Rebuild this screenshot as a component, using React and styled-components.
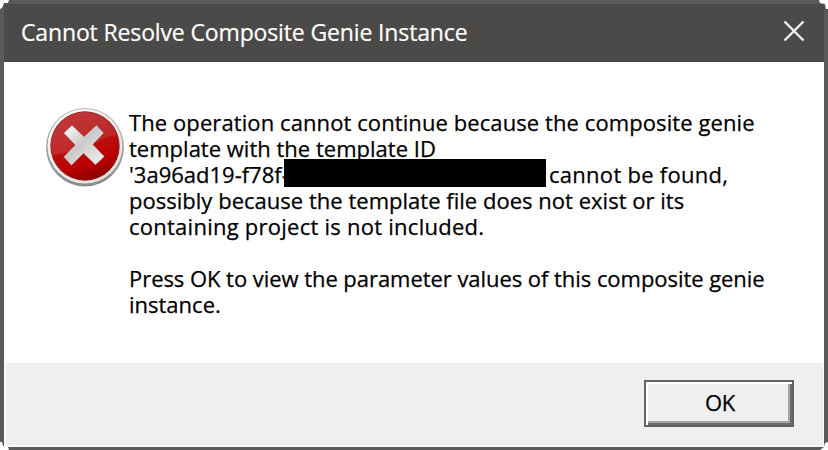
import React from 'react';
import styled, { createGlobalStyle } from 'styled-components';

const GlobalStyle = createGlobalStyle`
  body {
    margin: 0;
    background: #fff;
    font-family: 'Open Sans', 'Noto Sans', sans-serif;
  }
`;

const lines = [
  { text: 'The operation cannot continue because the composite genie', spacing: 0.09 },
  { text: 'template with the template ID', spacing: 0.01 },
  { text: "'3a96ad19-f78f-", tail: 'cannot be found,', spacing: 0, tailSpacing: 0.28 },
  { text: 'possibly because the template file does not exist or its', spacing: 0.02 },
  { text: 'containing project is not included.', spacing: 0.25 },
  { text: '', spacing: 0 },
  { text: 'Press OK to view the parameter values of this composite genie', spacing: -0.05 },
  { text: 'instance.', spacing: 0 },
];

const ErrorIcon = () => (
  <IconSvg viewBox="0 0 80 82">
    <defs>
      <linearGradient id="rim" x1="0" y1="0" x2="0" y2="1">
        <stop offset="0" stopColor="#b9b9b9" />
        <stop offset="0.5" stopColor="#a5a5a5" />
        <stop offset="1" stopColor="#8b8b8b" />
      </linearGradient>
      <linearGradient id="ring" x1="0" y1="0" x2="1" y2="1">
        <stop offset="0" stopColor="#ffffff" />
        <stop offset="1" stopColor="#dcdcdc" />
      </linearGradient>
      <linearGradient id="red" x1="0.3" y1="0" x2="0.6" y2="1">
        <stop offset="0" stopColor="#c02c2c" />
        <stop offset="0.5" stopColor="#b80f10" />
        <stop offset="0.75" stopColor="#bd0000" />
        <stop offset="1" stopColor="#8c0000" />
      </linearGradient>
      <linearGradient id="gloss" x1="0" y1="0" x2="0" y2="1">
        <stop offset="0" stopColor="#b86a6a" stopOpacity="0.2" />
        <stop offset="1" stopColor="#e07070" stopOpacity="0.28" />
      </linearGradient>
      <linearGradient id="cross" x1="0" y1="0" x2="1" y2="1">
        <stop offset="0" stopColor="#ffffff" />
        <stop offset="0.45" stopColor="#c9c9c9" />
        <stop offset="0.6" stopColor="#d6d6d6" />
        <stop offset="1" stopColor="#f4f4f4" />
      </linearGradient>
    </defs>
    <ellipse cx="39" cy="40.2" rx="39" ry="39.3" fill="url(#rim)" />
    <ellipse cx="39" cy="39.2" rx="37.4" ry="37.3" fill="url(#ring)" />
    <circle cx="39" cy="39" r="34.7" fill="#8e2222" />
    <circle cx="39" cy="39" r="33.8" fill="url(#red)" />
    <path d="M5.4 43 A33.8 33.8 0 0 1 71 28 Q62 29 49 35 Q27 46 6.5 48 Z" fill="url(#gloss)" />
    <path
      d="M26 18 L38 29.5 L50.5 18 L58 26 L47 37.5 L58.5 49.5 L49.5 58 L37.5 46.5 L25.5 58.5 L17.5 50 L29 38 L17.5 26 Z"
      fill="url(#cross)"
      stroke="#a62b2b"
      strokeWidth="0.6"
    />
  </IconSvg>
);

const App = () => (
  <>
    <GlobalStyle />
    <Frame>
      <Dialog>
        <TitleBar>
          <Title>Cannot Resolve Composite Genie Instance</Title>
          <CloseButton aria-label="Close">
            <svg width="22" height="22" viewBox="0 0 22 22">
              <path d="M1.5 1.5 L20.5 20.5 M20.5 1.5 L1.5 20.5" stroke="#f2f2ee" strokeWidth="2.4" />
            </svg>
          </CloseButton>
        </TitleBar>
        <Content>
          <ErrorIcon />
          <Message>
            {lines.map((line, i) => (
              <Line key={i} $spacing={line.spacing}>
                {line.tail ? <Identifier>{line.text}</Identifier> : <span>{line.text}</span>}
                {line.tail && <Redaction />}
                {line.tail && <Tail $spacing={line.tailSpacing}>{line.tail}</Tail>}
              </Line>
            ))}
          </Message>
        </Content>
        <Footer>
          <OkButton>OK</OkButton>
        </Footer>
      </Dialog>
    </Frame>
  </>
);

const Frame = styled.div`
  box-sizing: border-box;
  width: 828px;
  height: 450px;
  padding: 4px 4px 3px;
  background: #5b5a58;
  clip-path: polygon(
    9px 0, 819px 0, 820px 3px, 825px 4px, 826px 9px, 828px 9px,
    828px 442px, 825px 443px, 824px 447px, 820px 450px,
    9px 450px, 8px 447px, 3px 446px, 2px 442px, 0 442px,
    0 9px, 2px 8px, 4px 3px, 8px 3px
  );
`;

const Dialog = styled.div`
  display: flex;
  flex-direction: column;
  height: 443px;
  background: #fff;
`;

const TitleBar = styled.div`
  box-sizing: border-box;
  display: flex;
  align-items: center;
  justify-content: space-between;
  height: 58px;
  padding: 0 19px 0 17px;
  background: #4b4a48;
  border-bottom: 1px solid #434240;
`;

const Title = styled.span`
  margin-bottom: 2px;
  color: #fff;
  font-size: 23px;
  line-height: 30px;
  letter-spacing: -0.14px;
  white-space: nowrap;
  -webkit-text-stroke: 0.2px #fff;
`;

const CloseButton = styled.button`
  display: flex;
  margin: 0 0 4px;
  padding: 0;
  border: 0;
  background: none;
`;

const Content = styled.div`
  display: flex;
  flex: 1;
  padding: 45px 0 0 42px;
`;

const IconSvg = styled.svg`
  flex: none;
  width: 80px;
  height: 82px;
`;

const Message = styled.div`
  margin: 2px 0 0 3px;
`;

const Line = styled.div`
  display: flex;
  height: 26px;
  color: #000;
  font-size: 22px;
  line-height: 26px;
  letter-spacing: ${({ $spacing }) => $spacing}px;
  white-space: pre;
  -webkit-text-stroke: 0.25px #000;
`;

const Identifier = styled.span`
  width: 155px;
`;

const Redaction = styled.span`
  width: 262px;
  height: 28px;
  margin-top: -2px;
  background: #000;
`;

const Tail = styled.span`
  margin-left: 3px;
  letter-spacing: ${({ $spacing }) => $spacing}px;
`;

const Footer = styled.div`
  box-sizing: border-box;
  display: flex;
  justify-content: flex-end;
  height: 84px;
  padding: 17px 29px 0 0;
  background: #efefef;
  border: solid #fafafa;
  border-width: 0 1px 2px 2px;
`;

const OkButton = styled.button`
  box-sizing: border-box;
  width: 150px;
  height: 47px;
  padding: 0 0 4px 2px;
  border: 2px solid #636363;
  background: #efefef;
  box-shadow: inset 2px 2px #fff, inset -2px -2px #6a6a6a, inset -4px -4px #a5a5a5;
  color: #000;
  font-family: inherit;
  font-size: 22px;
  line-height: 38px;
  letter-spacing: -0.3px;
  -webkit-text-stroke: 0.25px #000;
`;

export default App;
